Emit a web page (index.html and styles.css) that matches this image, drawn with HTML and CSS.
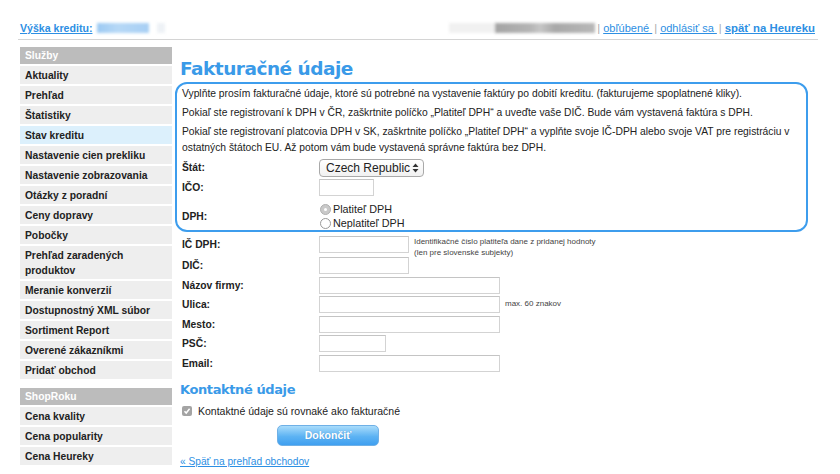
FILE: index.html
```html
<!DOCTYPE html>
<html lang="sk">
<head>
    <meta charset="UTF-8">
    <title>Fakturačné údaje</title>
    <link rel="stylesheet" href="styles.css">
</head>
<body>
    <div class="topbar">
        <div class="credit">
            <a href="#">Výška kreditu:</a>
            <span class="blur blur-blue"></span><span class="blur blur-faint"></span>
        </div>
        <div class="user-links">
            <span class="blur blur-light"></span><span class="blur blur-gray"></span><span class="sep">|</span><a href="#">obľúbené </a><span class="sep">|</span><a href="#">odhlásiť sa </a><span class="sep">|</span><a href="#" class="strong">späť na Heureku</a>
        </div>
    </div>

    <div class="page">
        <div class="sidebar">
            <div class="menu-title">Služby</div>
            <ul class="menu">
                <li><a href="#">Aktuality</a></li>
                <li><a href="#">Prehľad</a></li>
                <li><a href="#">Štatistiky</a></li>
                <li class="active"><a href="#">Stav kreditu</a></li>
                <li><a href="#">Nastavenie cien prekliku</a></li>
                <li><a href="#">Nastavenie zobrazovania</a></li>
                <li><a href="#">Otázky z poradní</a></li>
                <li><a href="#">Ceny dopravy</a></li>
                <li><a href="#">Pobočky</a></li>
                <li><a href="#">Prehľad zaradených produktov</a></li>
                <li><a href="#">Meranie konverzií</a></li>
                <li><a href="#">Dostupnostný XML súbor</a></li>
                <li><a href="#">Sortiment Report</a></li>
                <li><a href="#">Overené zákazníkmi</a></li>
                <li><a href="#">Pridať obchod</a></li>
            </ul>
            <div class="menu-title">ShopRoku</div>
            <ul class="menu">
                <li><a href="#">Cena kvality</a></li>
                <li><a href="#">Cena popularity</a></li>
                <li><a href="#">Cena Heureky</a></li>
            </ul>
        </div>

        <div class="main">
            <h1>Fakturačné údaje</h1>

            <div class="info-box">
                <p>Vyplňte prosím fakturačné údaje, ktoré sú potrebné na vystavenie faktúry po dobití kreditu. (fakturujeme spoplatnené kliky).</p>
                <p>Pokiaľ ste registrovaní k DPH v ČR, zaškrtnite políčko „Platiteľ DPH“ a uveďte vaše DIČ. Bude vám vystavená faktúra s DPH.</p>
                <p>Pokiaľ ste registrovaní platcovia DPH v SK, zaškrtnite políčko „Platiteľ DPH“ a vyplňte svoje IČ-DPH alebo svoje VAT pre registráciu v ostatných štátoch EU. Až potom vám bude vystavená správne faktúra bez DPH.</p>

                <div class="row row-state">
                    <label>Štát:</label>
                    <div class="select">
                        <span>Czech Republic</span>
                        <svg width="7" height="10" viewBox="0 0 7 10"><path d="M3.5 0.5 L6.5 4 H0.5 Z M3.5 9.5 L6.5 6 H0.5 Z" fill="#333"/></svg>
                    </div>
                </div>
                <div class="row row-ico">
                    <label>IČO:</label>
                    <input type="text" class="w-xs">
                </div>
                <div class="row row-dph">
                    <label>DPH:</label>
                    <div class="radios">
                        <div class="radio-line"><span class="radio checked"></span>Platiteľ DPH</div>
                        <div class="radio-line"><span class="radio"></span>Neplatiteľ DPH</div>
                    </div>
                </div>
            </div>

            <div class="fields">
                <div class="row row-icdph">
                    <label>IČ DPH:</label>
                    <input type="text" class="w-s">
                    <span class="hint">Identifikačné číslo platiteľa dane z pridanej hodnoty<br>(len pre slovenské subjekty)</span>
                </div>
                <div class="row">
                    <label>DIČ:</label>
                    <input type="text" class="w-s">
                </div>
                <div class="row">
                    <label>Názov firmy:</label>
                    <input type="text" class="w-l">
                </div>
                <div class="row">
                    <label>Ulica:</label>
                    <input type="text" class="w-l">
                    <span class="hint">max. 60 znakov</span>
                </div>
                <div class="row">
                    <label>Mesto:</label>
                    <input type="text" class="w-l">
                </div>
                <div class="row">
                    <label>PSČ:</label>
                    <input type="text" class="w-m">
                </div>
                <div class="row">
                    <label>Email:</label>
                    <input type="text" class="w-l">
                </div>
            </div>

            <h2>Kontaktné údaje</h2>
            <div class="same-check">
                <span class="checkbox">
                    <svg width="8" height="8" viewBox="0 0 8 8"><path d="M1.5 4.2 L3.2 6 L6.6 1.8" stroke="#fff" stroke-width="1.5" fill="none"/></svg>
                </span>
                Kontaktné údaje sú rovnaké ako fakturačné
            </div>
            <button class="submit">Dokončiť</button>
            <a href="#" class="back">« Späť na prehľad obchodov</a>
        </div>
    </div>
</body>
</html>
```

FILE: styles.css
```css
body {
    margin: 0;
    padding: 0;
    font-family: "Liberation Sans", Arial, sans-serif;
    font-size: 10.3px;
    color: #222;
    background: #fff;
}
a {
    color: #2d8fe3;
}

/* top bar */
.topbar {
    display: flex;
    justify-content: space-between;
    margin: 0 22px 0 18px;
    padding: 21px 3px 4px 2px;
    font-size: 11px;
    line-height: 14px;
    border-bottom: 1px solid #d4d4d4;
}
.credit a {
    font-weight: bold;
    font-size: 10.6px;
}
.user-links .sep {
    color: #aaa;
    margin: 0 3px 0 2px;
}
.user-links .strong {
    font-weight: bold;
    font-size: 11.4px;
}
.blur {
    display: inline-block;
    height: 10px;
    vertical-align: -1px;
    filter: blur(1.5px);
}
.blur-blue {
    width: 52px;
    margin-left: 1px;
    background: linear-gradient(90deg, #9ccaf3, #b6d8f6 40%, #a7cff4);
}
.blur-faint {
    width: 8px;
    margin-left: 8px;
    background: #eef2f6;
}
.blur-light {
    width: 46px;
    background: #f1f1f1;
}
.blur-gray {
    width: 100px;
    background: linear-gradient(90deg, #a4a4a4, #b4b4b4 35%, #c6c6c6 45%, #a8a8a8 60%, #b8b8b8);
}

/* layout */
.page {
    display: flex;
    padding-left: 20px;
    margin-top: 7px;
}
.sidebar {
    width: 152px;
    flex-shrink: 0;
}
.menu-title {
    background: #bcbcbc;
    color: #fff;
    font-weight: bold;
    padding: 2px 5px 1px;
    line-height: 14px;
    margin-bottom: 2px;
}
.menu {
    list-style: none;
    margin: 0 0 9px;
    padding: 0;
}
.menu li {
    background: #eeeeee;
    margin-bottom: 2px;
    padding: 2px 5px 1px;
    line-height: 15px;
}
.menu li.active {
    background: #dcf0fc;
}
.menu a {
    color: #222;
    font-weight: bold;
    text-decoration: none;
}

.main {
    margin-left: 3px;
    width: 633px;
}
h1 {
    margin: 10px 0 1px 5px;
    font-family: "DejaVu Sans", Verdana, sans-serif;
    font-size: 18.5px;
    letter-spacing: -0.5px;
    line-height: 24px;
    color: #3a9ae8;
}
h2 {
    margin: 10px 0 0 5px;
    font-family: "DejaVu Sans", Verdana, sans-serif;
    font-size: 13px;
    letter-spacing: -0.4px;
    line-height: 16px;
    color: #3a9ae8;
}

/* blue box */
.info-box {
    border: 2px solid #3d9ded;
    border-radius: 12px;
    padding: 2px 4px 0 5px;
}
.info-box p {
    margin: 0 0 3px;
    line-height: 16px;
}

.row {
    display: flex;
    align-items: center;
}
.row label {
    width: 137px;
    flex-shrink: 0;
    font-weight: bold;
}
.row-state {
    height: 17px;
}
.row-ico {
    margin-top: 2px;
    height: 18px;
}
.row-dph {
    margin-top: 6px;
}
.select {
    display: flex;
    align-items: center;
    justify-content: space-between;
    width: 93px;
    height: 16px;
    padding: 0 4px 0 6px;
    border: 1px solid #a9a9a9;
    border-radius: 4px;
    background: linear-gradient(#ffffff, #f1f1f1);
    font-size: 12px;
    color: #222;
}
.radios {
    margin-left: 1px;
}
.radio-line {
    display: flex;
    align-items: center;
    line-height: 14px;
    font-size: 10.8px;
}
.radio {
    display: inline-block;
    width: 9px;
    height: 9px;
    margin-right: 2px;
    border: 1px solid #9a9a9a;
    border-radius: 50%;
    background: #fff;
    position: relative;
}
.radio.checked {
    background: #c9c9c9;
    border-color: #b0b0b0;
}
.radio.checked::after {
    content: "";
    position: absolute;
    left: 3px;
    top: 3px;
    width: 3px;
    height: 3px;
    border-radius: 50%;
    background: #fff;
}

input[type="text"] {
    box-sizing: border-box;
    height: 17px;
    margin: 0;
    padding: 0 2px;
    border: 1px solid #d3d3d3;
    border-top-color: #c4c4c4;
    background: #fff;
}
.w-xs { width: 55px; }
.w-s { width: 90px; }
.w-m { width: 67px; }
.w-l { width: 181px; }

.fields {
    padding: 4px 0 0 7px;
}
.fields .row {
    height: 17px;
    margin-bottom: 2.6px;
}
.fields .row-icdph {
    margin-bottom: 4px;
}
.hint {
    margin-left: 5px;
    font-size: 8px;
    color: #444;
    line-height: 10.5px;
}
.row-icdph .hint {
    align-self: flex-start;
    margin-top: 1px;
}

.same-check {
    display: flex;
    align-items: center;
    margin: 6px 0 0 7px;
    line-height: 14px;
    font-size: 10.5px;
}
.checkbox {
    display: inline-flex;
    align-items: center;
    justify-content: center;
    width: 10px;
    height: 10px;
    margin-right: 6px;
    border-radius: 2px;
    background: #a4a4a4;
}
.submit {
    display: block;
    width: 102px;
    height: 21px;
    margin: 7px 0 0 102px;
    border: 1px solid #6fb0e6;
    border-radius: 5px;
    background: linear-gradient(#a9dcfb, #5db3f3 55%, #3f9ff0);
    color: #fff;
    font-family: "Liberation Sans", Arial, sans-serif;
    font-size: 10.5px;
    font-weight: bold;
    text-shadow: 0 0 1px rgba(0, 60, 120, 0.3);
}
.back {
    display: inline-block;
    margin: 10px 0 0 5px;
    line-height: 12px;
    font-size: 10.2px;
}
```
